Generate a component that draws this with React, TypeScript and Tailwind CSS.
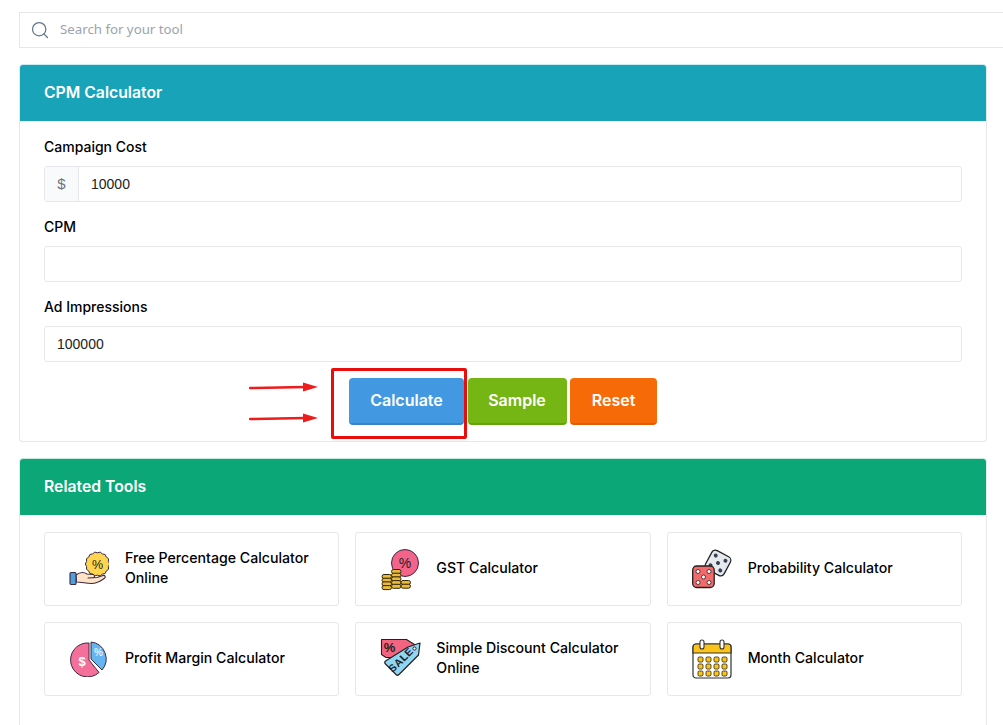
import { ReactNode } from 'react'
import { Search } from 'lucide-react'

const outline = "#3b2a45"

// little scalloped coin edge
const coinPoints = Array.from({ length: 28 })
  .map((_, i) => {
    const a = (i / 28) * Math.PI * 2
    const r = i % 2 === 0 ? 12.2 : 11.2
    return `${(28.5 + r * Math.cos(a)).toFixed(2)},${(13 + r * Math.sin(a)).toFixed(2)}`
  })
  .join(" ")

const HandIcon = () => (
  <svg width="40" height="36" viewBox="0 0 40 36">
    <polygon points={coinPoints} fill="#ffd54f" stroke={outline} strokeWidth="1" strokeLinejoin="round" />
    <text x="28.500" y="17.500" fontSize="12.500" textAnchor="middle" fontFamily="Liberation Sans, sans-serif" fill="#222">%</text>
    <path d="M7 24c4-3 8-3 11-1l6 .5c2 .3 2 3 0 3.300l-5 .2 9-.5 6-2c2-.5 3 1.500 1.500 2.800-4 3-8 5-12 5.200-6 .3-10-1.500-16-1.500z" fill="#ffe3c7" stroke={outline} strokeWidth="1.100" strokeLinejoin="round" />
    <rect x="1" y="21.500" width="6" height="12" rx="1" fill="#4f9fd8" stroke={outline} strokeWidth="1.100" />
  </svg>
)

const CoinRow = ({ x, y, n }: { x: number; y: number; n: number }) => (
  <g>
    {Array.from({ length: n }).map((_, i) => (
      <rect key={i} x={x} y={y + i * 3.700} width="9.500" height="4" rx="2" fill="#e9bb38" stroke="#33260c" strokeWidth="1" />
    ))}
  </g>
)

const CoinsIcon = () => (
  <svg width="40" height="46" viewBox="0 0 40 46">
    <circle cx="25" cy="17" r="13.500" fill="#f4638a" stroke={outline} strokeWidth="1" />
    <text x="25" y="22" fontSize="14" textAnchor="middle" fontFamily="Liberation Sans, sans-serif" fill="#222">%</text>
    <CoinRow x={2} y={28.500} n={4} />
    <CoinRow x={11.500} y={23.500} n={5} />
    <CoinRow x={21} y={34.500} n={2} />
  </svg>
)

const DiceIcon = () => (
  <svg width="42" height="40" viewBox="0 0 42 40">
    <g transform="rotate(28 26 14)">
      <rect x="15.500" y="3.500" width="21" height="21" rx="4" fill="#e6e9ee" stroke="#222" strokeWidth="1.300" />
      {[[20.500, 8.500], [31.500, 8.500], [26, 14], [20.500, 19.500], [31.500, 19.500]].map(([cx, cy]) => (
        <circle key={`${cx}-${cy}`} cx={cx} cy={cy} r="2" fill="#37424f" />
      ))}
    </g>
    <rect x="0.700" y="17" width="21.500" height="21.500" rx="4" fill="#f26a6a" stroke="#222" strokeWidth="1.300" />
    {[[6, 22.500], [17, 22.500], [11.500, 28], [6, 33.500], [17, 33.500]].map(([cx, cy]) => (
      <circle key={`${cx}-${cy}`} cx={cx} cy={cy} r="2" fill="#fff" stroke="#222" strokeWidth="0.800" />
    ))}
  </svg>
)

const PieIcon = () => (
  <svg width="40" height="36" viewBox="0 0 40 36">
    <path d="M20 2A17 17 0 1 0 30 31.500L20 19z" fill="#f4709b" stroke={outline} strokeWidth="1" />
    <path d="M22 1A17 17 0 0 1 33 29L22 18z" fill="#64b5f0" stroke={outline} strokeWidth="1" />
    <text x="13" y="25" fontSize="13" fontWeight="700" textAnchor="middle" fontFamily="Liberation Sans, sans-serif" fill="#fff">$</text>
    <text x="29.500" y="15" fontSize="10" fontWeight="700" textAnchor="middle" fontFamily="Liberation Sans, sans-serif" fill="#dff1ff">%</text>
  </svg>
)

const TagIcon = () => (
  <svg width="42" height="42" viewBox="0 0 42 42">
    <path d="M1.500 1.500h25l8 5-4 13H6l-4.500-3z" fill="#f2647f" stroke="#222" strokeWidth="1.100" strokeLinejoin="round" />
    <text x="9.500" y="14" fontSize="13" fontWeight="700" textAnchor="middle" fontFamily="Liberation Sans, sans-serif" fill="#222">%</text>
    <path d="M28 9l12-4-1.500 12L19 36.500c-1 1-2 1-3 0L5.500 26c-1-1-1-2 0-3z" fill="#8fd6f5" stroke="#222" strokeWidth="1.200" strokeLinejoin="round" />
    <circle cx="34.500" cy="10.500" r="1.600" fill="#fff" stroke="#222" strokeWidth="1" />
    <text x="21" y="25.500" fontSize="10.500" fontWeight="700" letterSpacing="0.500" textAnchor="middle" fontFamily="Liberation Sans, sans-serif" fill="#222" transform="rotate(-45 21 22)">SALE</text>
  </svg>
)

const CalendarIcon = () => (
  <svg width="40" height="40" viewBox="0 0 40 40">
    <rect x="1" y="5" width="38" height="34" rx="3" fill="#fff" stroke="#333" strokeWidth="1.200" />
    <path d="M1 14V8a3 3 0 0 1 3-3h32a3 3 0 0 1 3 3v6z" fill="#fcc419" stroke="#333" strokeWidth="1.200" />
    <rect x="8" y="1" width="4" height="9" rx="2" fill="#fff" stroke="#333" strokeWidth="1.100" />
    <rect x="28" y="1" width="4" height="9" rx="2" fill="#fff" stroke="#333" strokeWidth="1.100" />
    {[18, 25, 32].map((y) =>
      [6, 14, 22, 30].map((x) => (
        <rect key={`${x}-${y}`} x={x} y={y} width="5" height="5" rx="1.300" fill="#fcc419" stroke="#3a3320" strokeWidth="0.900" />
      ))
    )}
  </svg>
)

const tools: { name: ReactNode; icon: ReactNode }[] = [
  { name: <>Free Percentage Calculator<br />Online</>, icon: <HandIcon /> },
  { name: "GST Calculator", icon: <CoinsIcon /> },
  { name: "Probability Calculator", icon: <DiceIcon /> },
  { name: "Profit Margin Calculator", icon: <PieIcon /> },
  { name: <>Simple Discount Calculator<br />Online</>, icon: <TagIcon /> },
  { name: "Month Calculator", icon: <CalendarIcon /> },
]

const inputClass = "h-9 w-full rounded-[3px] border border-[#e5e7eb] bg-white px-3 text-[14px] text-[#222] outline-none font-['Liberation_Sans',sans-serif]"
const labelClass = "block mb-[9px] h-[19px] text-[14px] leading-[17px] font-medium text-black"

const Arrow = ({ className }: { className: string }) => (
  <svg className={`absolute ${className}`} width="72" height="12" viewBox="0 0 72 12">
    <path d="M1 7L56 6" stroke="#ee1c1c" strokeWidth="2.500" strokeLinecap="round" />
    <path d="M54 1.500l15 4.500-15 4.500z" fill="#ee1c1c" />
  </svg>
)

const App = () => {
  return (
    <div className="h-[725px] w-[1003px] overflow-hidden bg-white font-['Inter',sans-serif] pl-[19px] pt-3">
      {/* search bar runs off the right side */}
      <div className="flex h-9 w-[1000px] items-center border border-[#e5e7eb] bg-white pl-[10px]">
        <Search size={20} strokeWidth={1.5} className="text-[#64748b]" />
        <span className="ml-[10px] text-[13.25px] text-[#9ca3af] font-['Noto_Sans',sans-serif]">Search for your tool</span>
      </div>

      <div className="mt-4 h-[378px] w-[968px] rounded-[4px] border border-[#e5e7eb] border-t-[#c8eef4]">
        <div className="flex h-14 items-center rounded-t-[3px] bg-[#19a3b9] pl-6 pb-px text-[15.75px] font-semibold text-white">CPM Calculator</div>
        <div className="relative px-6 pt-[17px]">
          <label className={labelClass}>Campaign Cost</label>
          <div className="flex h-9 overflow-hidden rounded-[3px] border border-[#e5e7eb]">
            <span className="flex w-[34px] shrink-0 items-center justify-center border-r border-[#e5e7eb] bg-[#f8fafc] text-[15px] text-[#6b7280] font-['Liberation_Sans',sans-serif]">$</span>
            <input readOnly value="10000" className="w-full px-3 text-[14px] text-[#222] outline-none font-['Liberation_Sans',sans-serif]" />
          </div>
          <label className={`${labelClass} mt-4`}>CPM</label>
          <input readOnly className={inputClass} />
          <label className={`${labelClass} mt-4`}>Ad Impressions</label>
          <input readOnly value="100000" className={inputClass} />

          <div className="mt-4 flex justify-center gap-[3.500px] text-[16px] font-semibold text-white">
            <button className="h-[47px] w-[115px] rounded-[4px] border-b-2 border-[#3a84c4] bg-[#4299e1] pb-0.5">Calculate</button>
            <button className="h-[47px] w-[99px] rounded-[4px] border-b-2 border-[#65a30d] bg-[#75b514] pb-0.5">Sample</button>
            <button className="h-[47px] w-[87px] rounded-[4px] border-b-2 border-[#dd5f06] bg-[#f66b08] pb-0.5">Reset</button>
          </div>

          {/* annotation drawn over the screenshot */}
          <Arrow className="left-[229px] top-[260px]" />
          <Arrow className="left-[229px] top-[291px]" />
          <div className="absolute left-[311px] top-[247px] h-[71px] w-[136px] rounded-[2px] border-[3px] border-[#e90e0e]" />
        </div>
      </div>

      <div className="mt-4 h-[300px] w-[968px] rounded-[4px] border border-[#e5e7eb] border-t-[#c5eadd]">
        <div className="flex h-14 items-center rounded-t-[3px] bg-[#0ba776] pl-6 pb-px text-[15.75px] font-semibold text-white">Related Tools</div>
        <div className="grid grid-cols-3 gap-4 px-6 pt-[17px]">
          {tools.map((tool, index) => (
            <div key={index} className="flex h-[74px] items-center rounded-[3px] border border-[#e5e7eb] bg-white pl-6">
              <div className="flex w-14 shrink-0 items-center">{tool.icon}</div>
              <div className="pb-0.5 text-[14.15px] leading-5 font-medium text-black">{tool.name}</div>
            </div>
          ))}
        </div>
      </div>
    </div>
  )
}

export default App
